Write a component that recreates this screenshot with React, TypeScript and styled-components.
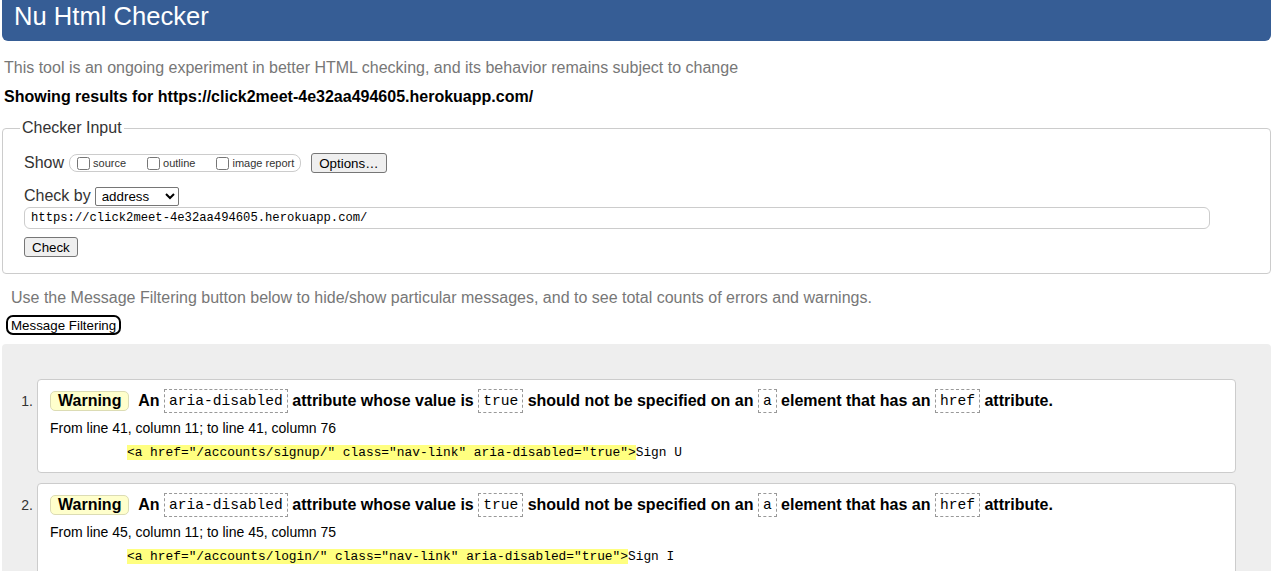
import styled, { createGlobalStyle } from 'styled-components';

const GlobalStyle = createGlobalStyle`
    body {
        margin: 0;
        background: #ffffff;
        font-family: 'Liberation Sans', Arial, sans-serif;
        color: #000000;
    }
`;

const Page = styled.div`
    padding: 0 6px 0 2px;
`;

const Header = styled.h1`
    margin: 0;
    height: 41px;
    padding-left: 12px;
    background-color: #365d95;
    border-radius: 0 0 6px 6px;
    color: #ffffff;
    font-size: 25.6px;
    font-weight: 400;
    line-height: 33px;
`;

const Intro = styled.p<{ $top: number; $left?: number }>`
    margin: ${p => p.$top}px 0 0 ${p => p.$left ?? 2}px;
    font-size: 16px;
    line-height: 18px;
    color: #777777;
`;

const Results = styled.p`
    margin: 11px 0 0 2px;
    font-size: 16px;
    line-height: 18px;
    font-weight: 700;
`;

const Fieldset = styled.fieldset`
    margin: 13px 0 0 0;
    padding: 16px 21px 16px 21px;
    border: 1px solid #cccccc;
    border-radius: 4px;
    min-width: 0;
`;

const Legend = styled.legend`
    margin-left: -4px;
    padding: 0 2px;
    font-size: 16px;
    line-height: 18px;
    color: #333333;
`;

const Row = styled.div<{ $top?: number }>`
    display: flex;
    align-items: center;
    margin-top: ${p => p.$top ?? 0}px;
    height: 20px;
    font-size: 16px;
    color: #333333;
`;

const ShowBox = styled.div`
    display: flex;
    align-items: center;
    gap: 18px;
    height: 16px;
    margin-left: 5px;
    padding: 0 6px 0 4px;
    border: 1px solid #cccccc;
    border-radius: 8px;
`;

const CheckLabel = styled.label`
    display: flex;
    align-items: center;
    font-size: 11px;
    color: #333333;

    input {
        width: 13px;
        height: 13px;
        margin: 0 3px 0 3px;
    }
`;

const Button = styled.button<{ $left?: number }>`
    height: 20px;
    margin-left: ${p => p.$left ?? 0}px;
    padding: 0 7px;
    background: #efefef;
    border: 1px solid #767676;
    border-radius: 3px;
    font-family: 'Liberation Sans', Arial, sans-serif;
    font-size: 13.33px;
    color: #000000;
`;

const Select = styled.select`
    width: 84px;
    height: 19px;
    margin-left: 4px;
    padding: 0 2px;
    font-family: 'Liberation Sans', Arial, sans-serif;
    font-size: 13.33px;
    color: #000000;
    border: 1px solid #767676;
    border-radius: 2px;
    background: #ffffff;
`;

const UrlInput = styled.input`
    display: block;
    box-sizing: border-box;
    width: 1186px;
    height: 22px;
    margin-top: 1px;
    padding: 0 6px;
    border: 1px solid #cccccc;
    border-radius: 6px;
    font-family: 'Liberation Mono', 'DejaVu Sans Mono', monospace;
    font-size: 12.2px;
    color: #000000;
`;

const FilterButton = styled.button`
    display: block;
    height: 20px;
    margin: 8px 0 0 4px;
    padding: 0 3px;
    background: #ffffff;
    border: 2px solid #000000;
    border-radius: 7px;
    font-family: 'Liberation Sans', Arial, sans-serif;
    font-size: 13.33px;
    line-height: 15px;
    color: #000000;
`;

const ResultsArea = styled.ol`
    list-style: none;
    margin: 9px 0 0 0;
    padding: 35px 35px 40px 0;
    background: #eeeeee;
    border-radius: 4px;
    display: flex;
    flex-direction: column;
    gap: 10px;
`;

const Item = styled.li`
    display: flex;
`;

const Num = styled.span`
    width: 35px;
    flex: none;
    box-sizing: border-box;
    padding: 10px 4px 0 0;
    text-align: right;
    font-size: 14px;
    line-height: 24px;
    color: #333333;
`;

const Card = styled.div`
    flex: 1;
    padding: 9px 12px 10px 12px;
    background: #ffffff;
    border: 1px solid #cccccc;
    border-radius: 4px;
`;

const Message = styled.p`
    margin: 0;
    height: 24px;
    font-size: 16px;
    font-weight: 700;
    line-height: 24px;
    white-space: nowrap;
`;

const Badge = styled.strong`
    display: inline-block;
    height: 20px;
    margin: 2px 5px 0 0;
    padding: 0 7px;
    background: #ffffcc;
    border: 1px solid #dcdcb4;
    border-radius: 5px;
    line-height: 18px;
    vertical-align: top;
    box-sizing: border-box;
`;

const Code = styled.code`
    display: inline-block;
    height: 24px;
    box-sizing: border-box;
    padding: 0 4px;
    border: 1px dashed #999999;
    font-family: 'Liberation Mono', 'DejaVu Sans Mono', monospace;
    font-size: 14.6px;
    font-weight: 400;
    line-height: 22px;
    vertical-align: top;
`;

const Location = styled.p`
    margin: 6px 0 0 0;
    font-size: 14px;
    line-height: 18px;
    color: #000000;
`;

const Extract = styled.p`
    margin: 7px 0 0 77px;
    font-family: 'Liberation Mono', 'DejaVu Sans Mono', monospace;
    font-size: 12.85px;
    line-height: 18px;
    white-space: pre;

    mark {
        background: #ffff80;
        color: #000000;
    }
`;

const messages = [
    {
        from: 'From line 41, column 11; to line 41, column 76',
        marked: '<a href="/accounts/signup/" class="nav-link" aria-disabled="true">',
        rest: 'Sign U',
    },
    {
        from: 'From line 45, column 11; to line 45, column 75',
        marked: '<a href="/accounts/login/" class="nav-link" aria-disabled="true">',
        rest: 'Sign I',
    },
];

export default function App() {
    return (
        <Page>
            <GlobalStyle />
            <Header>Nu Html Checker</Header>
            <Intro $top={18}>This tool is an ongoing experiment in better HTML checking, and its behavior remains subject to change</Intro>
            <Results>Showing results for https://click2meet-4e32aa494605.herokuapp.com/</Results>

            <Fieldset>
                <Legend>Checker Input</Legend>
                <Row>
                    Show
                    <ShowBox>
                        <CheckLabel><input type="checkbox" />source</CheckLabel>
                        <CheckLabel><input type="checkbox" />outline</CheckLabel>
                        <CheckLabel><input type="checkbox" />image report</CheckLabel>
                    </ShowBox>
                    <Button $left={10}>Options…</Button>
                </Row>
                <Row $top={13}>
                    Check by
                    <Select defaultValue="address">
                        <option value="address">address</option>
                        <option value="upload">file upload</option>
                        <option value="text">text input</option>
                    </Select>
                </Row>
                <UrlInput defaultValue="https://click2meet-4e32aa494605.herokuapp.com/" />
                <Row $top={8}>
                    <Button>Check</Button>
                </Row>
            </Fieldset>

            <Intro $top={15} $left={9}>Use the Message Filtering button below to hide/show particular messages, and to see total counts of errors and warnings.</Intro>
            <FilterButton>Message Filtering</FilterButton>

            <ResultsArea>
                {messages.map((m, i) => (
                    <Item key={i}>
                        <Num>{i + 1}.</Num>
                        <Card>
                            <Message>
                                <Badge>Warning</Badge> An <Code>aria-disabled</Code> attribute whose value is <Code>true</Code> should not be specified on an <Code>a</Code> element that has an <Code>href</Code> attribute.
                            </Message>
                            <Location>{m.from}</Location>
                            <Extract><mark>{m.marked}</mark>{m.rest}</Extract>
                        </Card>
                    </Item>
                ))}
            </ResultsArea>
        </Page>
    );
}
